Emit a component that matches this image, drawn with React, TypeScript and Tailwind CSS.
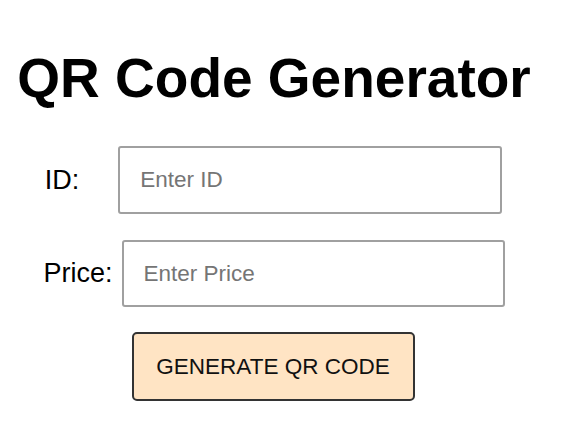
export default function App() {
  return (
    <div className="flex flex-col items-center bg-white min-h-[427px] pr-[22px] font-['Liberation_Sans',Arial,sans-serif] text-black">
      <h1 className="mt-[51px] text-[55px] leading-none font-bold">QR Code Generator</h1>

      <div className="mt-[40px] flex items-center gap-[39px] pr-[1px]">
        <label htmlFor="id" className="text-[27px]">ID:</label>
        <input
          id="id"
          type="text"
          placeholder="Enter ID"
          className="w-[384px] h-[68px] px-[20px] text-[22.5px] border-2 border-[#a0a0a0] rounded-[3px] outline-none placeholder:text-[#757575]"
        />
      </div>

      <div className="mt-[26px] flex items-center gap-[9px]">
        <label htmlFor="price" className="text-[27px]">Price:</label>
        <input
          id="price"
          type="text"
          placeholder="Enter Price"
          className="w-[383px] h-[67px] px-[20px] text-[22.5px] border-2 border-[#a0a0a0] rounded-[3px] outline-none placeholder:text-[#757575]"
        />
      </div>

      <button className="mt-[25px] w-[283px] h-[69px] bg-[#ffe4c4] border-2 border-[#333333] rounded-[5px] text-[22.5px] text-[#111] ml-[-2px]">
        GENERATE QR CODE
      </button>
    </div>
  );
}
